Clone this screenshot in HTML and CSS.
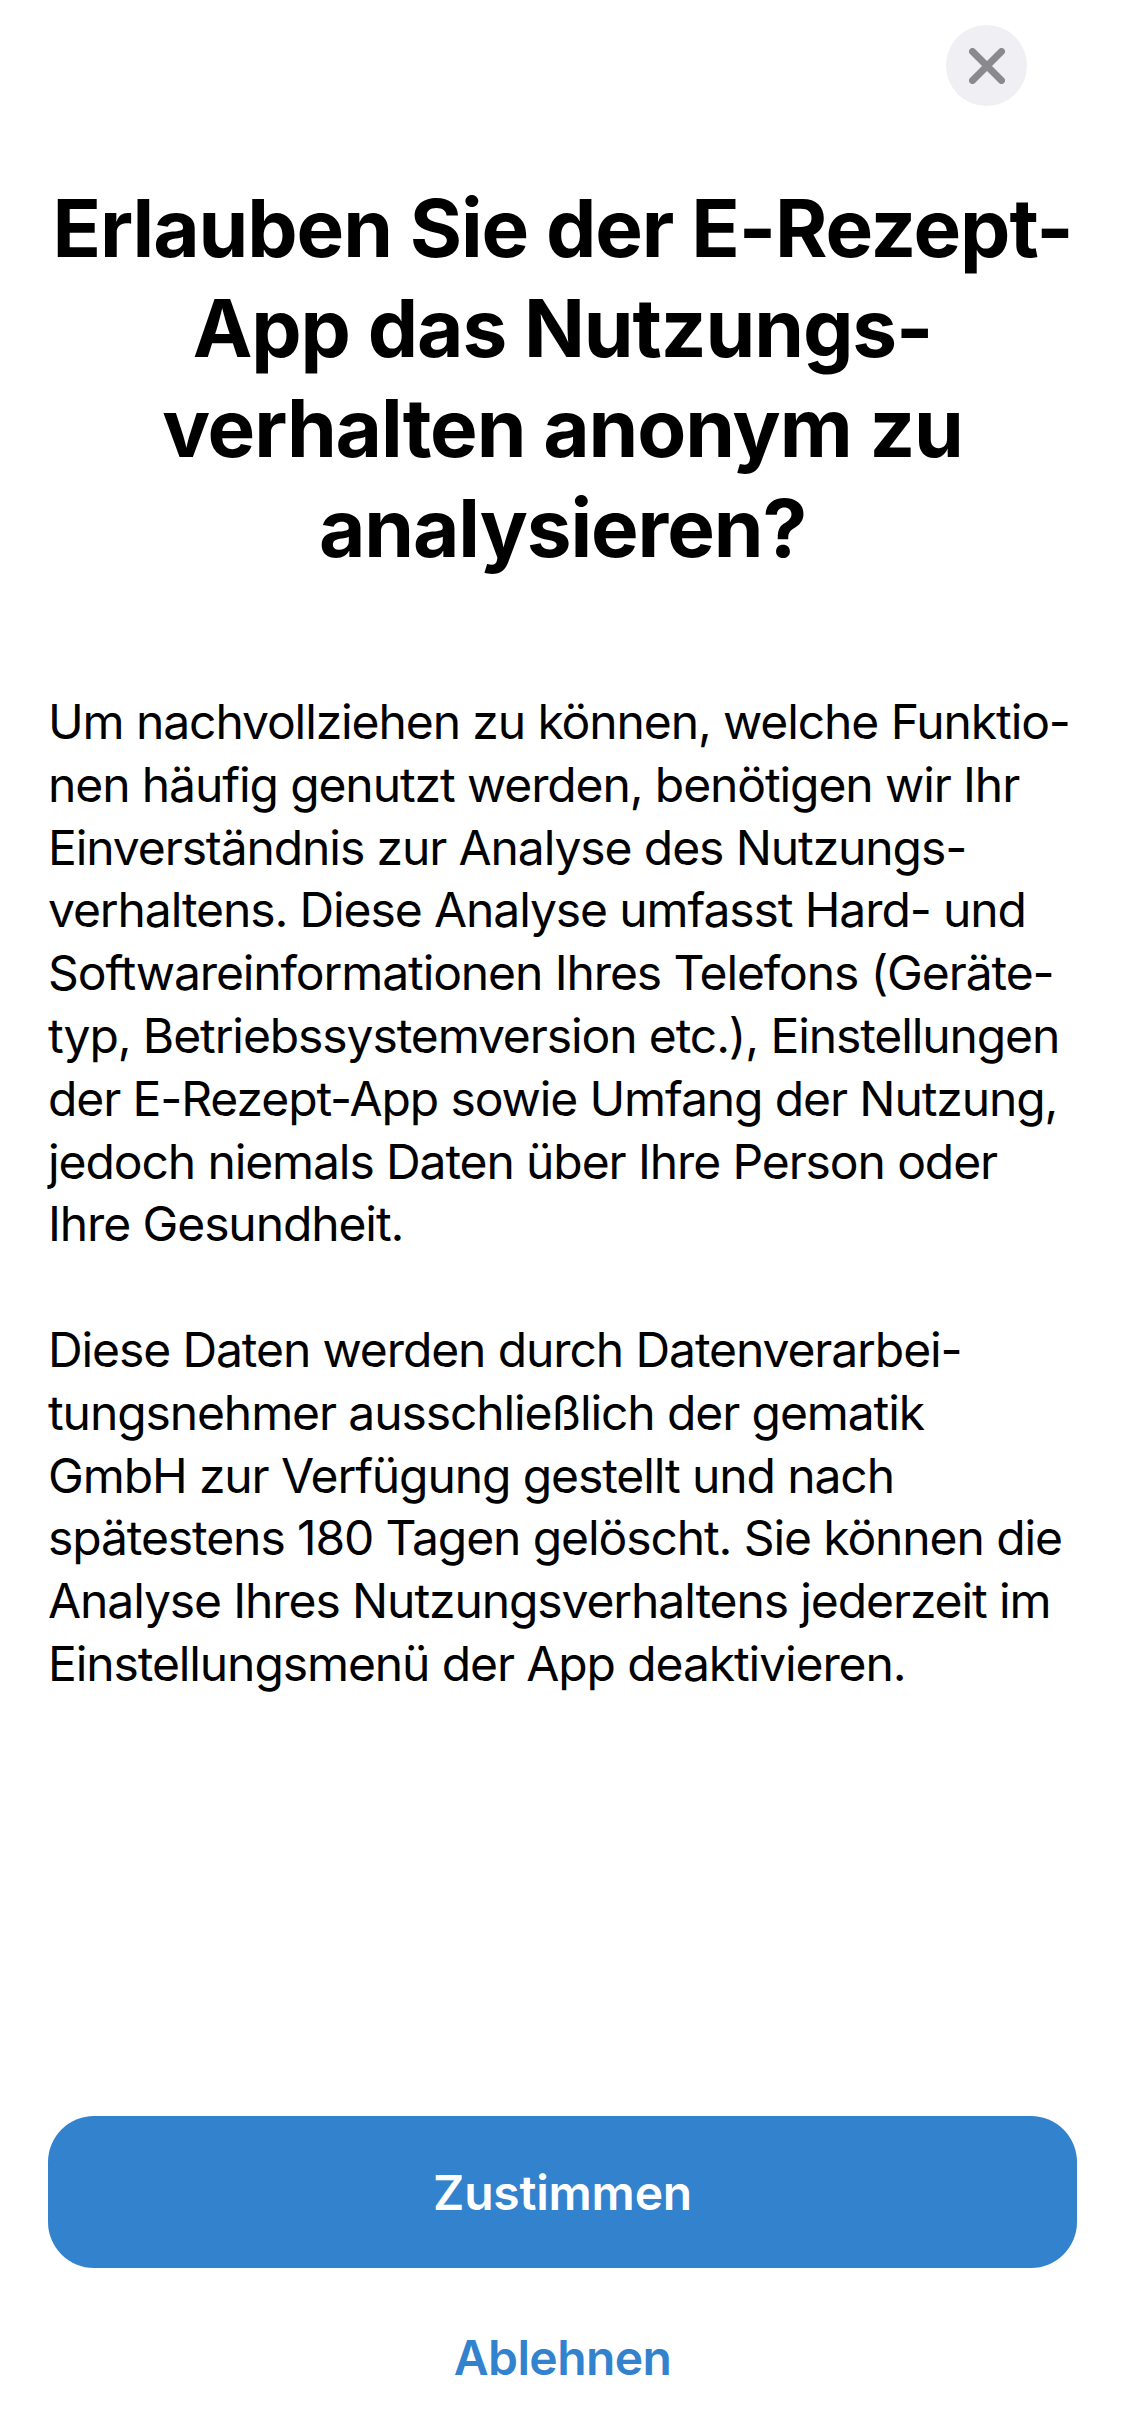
FILE: index.html
```html
<!DOCTYPE html>
<html lang="de">
<head>
<meta charset="utf-8">
<title>Analyse</title>
<link rel="stylesheet" href="styles.css">
</head>
<body>
<div class="page">
  <header class="top">
    <button class="close" aria-label="Schließen">
      <svg viewBox="0 0 36 36" width="36" height="36">
        <path d="M3.5 3.5 L32.5 32.5 M32.5 3.5 L3.5 32.5" stroke="#8a8a8e" stroke-width="7" stroke-linecap="round" fill="none"/>
      </svg>
    </button>
  </header>
  <main class="content">
    <h1 class="title">Erlauben Sie der E-Rezept-<br>App das Nutzungs-<br>verhalten anonym zu<br>analysieren?</h1>
    <div class="text">
      <p>Um nachvollziehen zu können, welche Funktio-<br>nen häufig genutzt werden, benötigen wir Ihr<br>Einverständnis zur Analyse des Nutzungs-<br>verhaltens. Diese Analyse umfasst Hard- und<br>Softwareinformationen Ihres Telefons (Geräte-<br>typ, Betriebssystemversion etc.), Einstellungen<br>der E-Rezept-App sowie Umfang der Nutzung,<br>jedoch niemals Daten über Ihre Person oder<br>Ihre Gesundheit.</p>
      <p>Diese Daten werden durch Datenverarbei-<br>tungsnehmer ausschließlich der gematik<br>GmbH zur Verfügung gestellt und nach<br>spätestens 180 Tagen gelöscht. Sie können die<br>Analyse Ihres Nutzungsverhaltens jederzeit im<br>Einstellungsmenü der App deaktivieren.</p>
    </div>
  </main>
  <footer class="actions">
    <button class="primary">Zustimmen</button>
    <button class="secondary">Ablehnen</button>
  </footer>
</div>
</body>
</html>
```

FILE: styles.css
```css
* { box-sizing: border-box; }
html, body {
  margin: 0;
  padding: 0;
  background: #ffffff;
}
body {
  font-family: Inter, "Noto Sans", "Liberation Sans", sans-serif;
  color: #000000;
}
.page {
  height: 2436px;
  display: flex;
  flex-direction: column;
}
.top {
  display: flex;
  justify-content: flex-end;
  padding: 25px 98px 0 0;
}
.close {
  width: 81px;
  height: 81px;
  border-radius: 50%;
  border: none;
  background: #efeff4;
  padding: 0;
  display: flex;
  align-items: center;
  justify-content: center;
}
.content {
  padding: 0 48px;
}
.title {
  margin: 72px 0 0;
  font-size: 80px;
  line-height: 100px;
  font-weight: 700;
  text-align: center;
  white-space: nowrap;
  letter-spacing: -1.1px;
}
.text {
  margin-top: 113px;
  font-size: 48px;
  line-height: 62.8px;
  white-space: nowrap;
  letter-spacing: -1.1px;
}
.text p {
  margin: 0 0 62.8px;
}
.actions {
  margin-top: auto;
  padding: 0 48px 48px;
  display: flex;
  flex-direction: column;
  gap: 60px;
}
.primary {
  height: 152px;
  border: none;
  border-radius: 46px;
  background: #3282ce;
  color: #ffffff;
  font-family: inherit;
  font-size: 48px;
  font-weight: 600;
  letter-spacing: -0.2px;
}
.secondary {
  height: 60px;
  border: none;
  background: none;
  padding: 0;
  color: #3282ce;
  font-family: inherit;
  font-size: 48px;
  line-height: 60px;
  font-weight: 600;
  letter-spacing: -0.6px;
}
```
